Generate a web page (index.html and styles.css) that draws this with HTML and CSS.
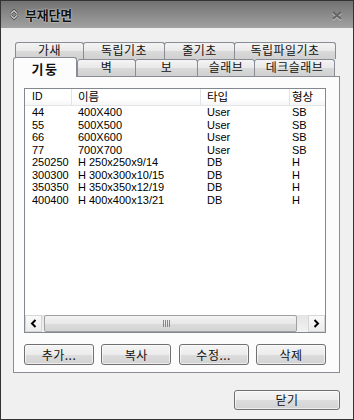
FILE: index.html
```html
<!DOCTYPE html>
<html lang="ko">
<head>
<meta charset="utf-8">
<link rel="stylesheet" href="styles.css">
</head>
<body>
<div class="window">
  <div class="titlebar">
    <svg class="ticon" width="8" height="11" viewBox="0 0 8 11">
      <path d="M1 4.5 L4 1.5 L7 4.5" fill="none" stroke="#3a3a3a" stroke-width="2.4"/>
      <path d="M1 6.5 L4 9.5 L7 6.5" fill="none" stroke="#3a3a3a" stroke-width="2.4"/>
      <path d="M1 4.5 L4 1.5 L7 4.5" fill="none" stroke="#d8d8d8" stroke-width="1.1"/>
      <path d="M1 6.5 L4 9.5 L7 6.5" fill="none" stroke="#d8d8d8" stroke-width="1.1"/>
    </svg>
    <span class="ttext">부재단면</span>
    <svg class="close" width="12" height="11" viewBox="0 0 12 11">
      <path d="M2 2 L10 9 M10 2 L2 9" stroke="#c8c8c8" stroke-width="2.2" transform="translate(0 1)"/>
      <path d="M2 2 L10 9 M10 2 L2 9" stroke="#666" stroke-width="2.2"/>
    </svg>
  </div>
  <div class="body">
    <div class="tabs">
      <div class="row back">
        <div class="tab w1">가새</div>
        <div class="tab w2">독립기초</div>
        <div class="tab w3">줄기초</div>
        <div class="tab w4">독립파일기초</div>
      </div>
      <div class="row front">
        <div class="tab sel">기둥</div>
        <div class="tab f2">벽</div>
        <div class="tab f3">보</div>
        <div class="tab f4">슬래브</div>
        <div class="tab f5">데크슬래브</div>
      </div>
    </div>
    <div class="panel">
      <div class="list">
        <div class="header">
          <div class="hc c1">ID</div>
          <div class="hc c2">이름</div>
          <div class="hc c3">타입</div>
          <div class="hc c4">형상</div>
        </div>
        <div class="rows">
          <div class="r"><span class="c1">44</span><span class="c2">400X400</span><span class="c3">User</span><span class="c4">SB</span></div>
          <div class="r"><span class="c1">55</span><span class="c2">500X500</span><span class="c3">User</span><span class="c4">SB</span></div>
          <div class="r"><span class="c1">66</span><span class="c2">600X600</span><span class="c3">User</span><span class="c4">SB</span></div>
          <div class="r"><span class="c1">77</span><span class="c2">700X700</span><span class="c3">User</span><span class="c4">SB</span></div>
          <div class="r"><span class="c1">250250</span><span class="c2">H 250x250x9/14</span><span class="c3">DB</span><span class="c4">H</span></div>
          <div class="r"><span class="c1">300300</span><span class="c2">H 300x300x10/15</span><span class="c3">DB</span><span class="c4">H</span></div>
          <div class="r"><span class="c1">350350</span><span class="c2">H 350x350x12/19</span><span class="c3">DB</span><span class="c4">H</span></div>
          <div class="r"><span class="c1">400400</span><span class="c2">H 400x400x13/21</span><span class="c3">DB</span><span class="c4">H</span></div>
        </div>
        <div class="hscroll">
          <div class="sbtn">
            <svg width="7" height="9" viewBox="0 0 7 9"><path d="M5.5 1 L2 4.5 L5.5 8" fill="none" stroke="#000" stroke-width="2"/></svg>
          </div>
          <div class="track">
            <div class="thumb">
              <svg width="8" height="7" viewBox="0 0 8 7"><path d="M0.5 0 V7 M2.5 0 V7 M4.5 0 V7 M6.5 0 V7" stroke="#888" stroke-width="1"/></svg>
            </div>
          </div>
          <div class="sbtn">
            <svg width="7" height="9" viewBox="0 0 7 9"><path d="M1.5 1 L5 4.5 L1.5 8" fill="none" stroke="#000" stroke-width="2"/></svg>
          </div>
        </div>
      </div>
      <div class="buttons">
        <div class="btn">추가...</div>
        <div class="btn">복사</div>
        <div class="btn">수정...</div>
        <div class="btn">삭제</div>
      </div>
    </div>
    <div class="footer">
      <div class="btn closebtn">닫기</div>
    </div>
  </div>
</div>
</body>
</html>
```

FILE: styles.css
```css
html, body {
  margin: 0;
  padding: 0;
  background: #f0f0f0;
}
.window {
  width: 354px;
  height: 420px;
  box-sizing: border-box;
  border: 1px solid #333;
  background: #f0f0f0;
  font-family: "Noto Sans CJK KR", "Liberation Sans", sans-serif;
  color: #000;
  display: flex;
  flex-direction: column;
}
.titlebar {
  height: 27px;
  flex: none;
  background: linear-gradient(#727272, #a2a2a2);
  display: flex;
  align-items: center;
  padding-left: 9px;
  padding-right: 10px;
}
.ticon { flex: none; }
.ttext {
  margin-left: 7px;
  font-weight: bold;
  font-size: 13px;
  letter-spacing: -0.2px;
  color: #111;
  text-shadow: 0 0 2px rgba(255,255,255,0.7), 0 0 1px rgba(255,255,255,0.6);
  flex: 1;
}
.close { flex: none; margin-top: 2px; }
.body {
  padding: 14px 13px 0 12px;
  flex: 1;
  display: flex;
  flex-direction: column;
}
.tabs {
  height: 34px;
  display: flex;
  flex-direction: column;
}
.row {
  display: flex;
  height: 17px;
}
.back { padding-left: 2px; }
.front {
  align-items: flex-end;
  position: relative;
  z-index: 2;
}
.tab {
  box-sizing: border-box;
  height: 17px;
  border: 1px solid #898c95;
  border-bottom: none;
  border-radius: 3px 3px 0 0;
  background: linear-gradient(#f4f4f4, #e9e9e9 50%, #dadada 51%, #d0d0d0);
  font-size: 12px;
  line-height: 14px;
  text-align: center;
  letter-spacing: 0.5px;
  color: #111;
  flex: none;
  overflow: hidden;
}
.back .tab { line-height: 12px; padding-top: 1px; }
.tab + .tab { margin-left: -1px; }
.w1 { width: 69px; }
.w2 { width: 82px; }
.w3 { width: 71px; }
.w4 { width: 102px; }
.tab.sel {
  width: 64px;
  height: 20px;
  margin-bottom: -1px;
  background: #fcfcfc;
  font-weight: bold;
  font-size: 13px;
  line-height: 17px;
  padding-top: 2px;
  letter-spacing: 1.5px;
  position: relative;
  z-index: 3;
}
.tab.sel + .tab { margin-left: 0; }
.f2 { width: 59px; }
.f3 { width: 63px; }
.f4 { width: 58px; }
.f5 { width: 81px; }
.panel {
  box-sizing: border-box;
  width: 327px;
  height: 297px;
  border: 1px solid #898c95;
  background: #fcfcfc;
  padding: 11px 14px 7px 10px;
  display: flex;
  flex-direction: column;
}
.list {
  box-sizing: border-box;
  width: 302px;
  height: 245px;
  border: 1px solid #828790;
  background: #fff;
  display: flex;
  flex-direction: column;
}
.header {
  height: 16px;
  flex: none;
  display: grid;
  grid-template-columns: 46px 129px 89px 1fr;
  background: linear-gradient(#ffffff, #ffffff 60%, #f5f6f7);
  border-bottom: 1px solid #e5e5e5;
  font-size: 11.5px;
  line-height: 15px;
}
.hc { padding-left: 6px; white-space: nowrap; overflow: hidden; }
.hc.c1 { font-family: "Liberation Sans", sans-serif; font-size: 10.5px; padding-left: 7px; }
.hc + .hc { border-left: 1px solid #e0e3e8; }
.hc.c4 { padding-left: 2px; }
.rows {
  flex: 1;
  font-family: "Liberation Sans", sans-serif;
  font-size: 11px;
}
.r {
  display: grid;
  grid-template-columns: 46px 129px 89px 1fr;
  height: 12.5px;
  line-height: 12.5px;
  white-space: nowrap;
}
.r .c1 { padding-left: 7px; }
.r .c2 { padding-left: 7px; }
.r .c3 { padding-left: 7px; }
.r .c4 { padding-left: 3px; }
.hscroll {
  height: 17px;
  flex: none;
  display: flex;
  background: linear-gradient(#e4e4e4, #f2f2f2);
}
.sbtn {
  box-sizing: border-box;
  width: 17px;
  height: 17px;
  flex: none;
  border: 1px solid #d6d6d6;
  background: linear-gradient(#fafafa, #ececec);
  display: flex;
  align-items: center;
  justify-content: center;
}
.track {
  flex: 1;
  padding: 0 11px 0 2px;
  display: flex;
}
.thumb {
  box-sizing: border-box;
  flex: 1;
  border: 1px solid #a0a0a0;
  border-radius: 2px;
  background: linear-gradient(#f3f3f3, #e8e8e8 50%, #dcdcdc 51%, #d4d4d4);
  display: flex;
  align-items: center;
  justify-content: center;
  padding-right: 8px;
}
.buttons {
  margin-top: 11px;
  display: flex;
  justify-content: space-between;
  width: 302px;
}
.btn {
  box-sizing: border-box;
  width: 70px;
  height: 21px;
  border: 1px solid #707070;
  border-radius: 3px;
  background: linear-gradient(#f4f4f4, #ececec 50%, #dddddd 51%, #d2d2d2);
  font-size: 12px;
  line-height: 19px;
  text-align: center;
  color: #111;
  letter-spacing: 0.5px;
  box-shadow: inset 0 0 0 1px rgba(255,255,255,0.6);
}
.footer {
  margin-top: 17px;
  display: flex;
  justify-content: flex-end;
  width: 327px;
}
.closebtn {
  width: 106px;
  height: 20px;
  line-height: 18px;
}
```
